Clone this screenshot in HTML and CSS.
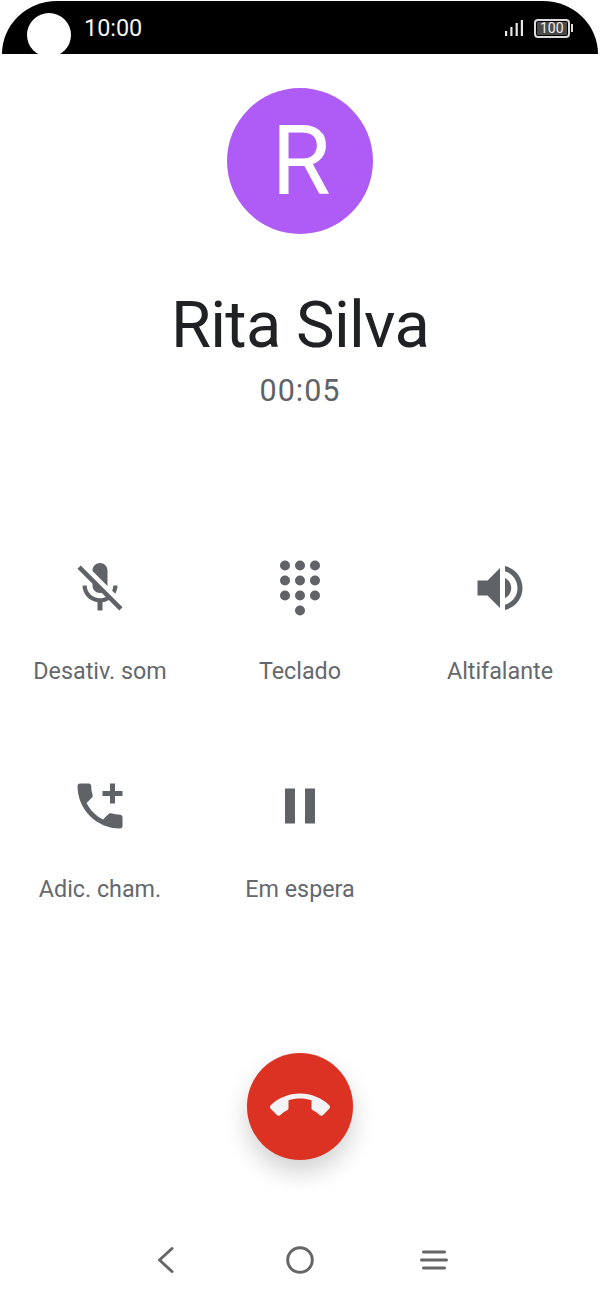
FILE: index.html
```html
<!DOCTYPE html>
<html lang="pt">
<head>
<meta charset="utf-8">
<title>Chamada</title>
<link rel="stylesheet" href="styles.css">
</head>
<body>
<div class="screen">
  <header class="status">
    <span class="camera"></span>
    <span class="time">10:00</span>
    <span class="status-right">
      <svg class="signal" width="20" height="18" viewBox="0 0 20 18"><path d="M1 12h2.200v5H1zM6.300 8h2.200v9H6.300zM11.600 4h2.200v13h-2.200zM16.800 1H19v16h-2.200z"/></svg>
      <span class="battery"><span class="battery-fill">100</span></span><span class="battery-tip"></span>
    </span>
  </header>

  <section class="contact">
    <div class="avatar">R</div>
    <h1 class="name">Rita Silva</h1>
    <div class="timer">00:05</div>
  </section>

  <section class="actions">
    <div class="action">
      <svg class="icon" viewBox="0 0 24 24"><path d="M19 11h-1.700c0 .74-.16 1.430-.43 2.050l1.230 1.230c.56-.98.9-2.090.9-3.280zm-4.020.17c0-.06.02-.11.02-.17V5c0-1.660-1.340-3-3-3S9 3.340 9 5v.18l5.980 5.990zM4.270 3L3 4.270l6.010 6.010V11c0 1.660 1.330 3 2.990 3 .22 0 .44-.03.65-.08l1.660 1.660c-.71.33-1.500.52-2.310.52-2.760 0-5.300-2.100-5.300-5.100H5c0 3.410 2.720 6.230 6 6.720V21h2v-3.280c.91-.13 1.770-.45 2.540-.9L19.730 21 21 19.730 4.270 3z"/></svg>
      <span class="label">Desativ. som</span>
    </div>
    <div class="action">
      <svg class="icon" viewBox="0 0 24 24"><circle cx="12" cy="21" r="2"/><circle cx="6" cy="3" r="2"/><circle cx="6" cy="9" r="2"/><circle cx="6" cy="15" r="2"/><circle cx="12" cy="3" r="2"/><circle cx="12" cy="9" r="2"/><circle cx="12" cy="15" r="2"/><circle cx="18" cy="3" r="2"/><circle cx="18" cy="9" r="2"/><circle cx="18" cy="15" r="2"/></svg>
      <span class="label">Teclado</span>
    </div>
    <div class="action">
      <svg class="icon" viewBox="0 0 24 24"><path d="M3 9v6h4l5 5V4L7 9H3zm13.500 3c0-1.770-1.020-3.290-2.500-4.030v8.050c1.480-.73 2.500-2.250 2.500-4.020zM14 3.230v2.060c2.890.86 5 3.540 5 6.710s-2.110 5.850-5 6.710v2.060c4.010-.91 7-4.490 7-8.770s-2.990-7.860-7-8.770z"/></svg>
      <span class="label">Altifalante</span>
    </div>
    <div class="action">
      <svg class="icon" viewBox="0 0 24 24"><path d="M20 15.500c-1.250 0-2.450-.2-3.570-.57-.35-.11-.74-.03-1.020.24l-2.200 2.200c-2.830-1.440-5.150-3.750-6.590-6.590l2.200-2.210c.28-.26.36-.65.25-1C8.700 6.450 8.500 5.250 8.500 4c0-.55-.45-1-1-1H4c-.55 0-1 .45-1 1 0 9.390 7.610 17 17 17 .55 0 1-.45 1-1v-3.500c0-.55-.45-1-1-1zM21 6h-3V3h-2v3h-3v2h3v3h2V8h3z"/></svg>
      <span class="label">Adic. cham.</span>
    </div>
    <div class="action">
      <svg class="icon" viewBox="0 0 24 24"><path d="M6 19h4V5H6v14zm8-14v14h4V5h-4z"/></svg>
      <span class="label">Em espera</span>
    </div>
  </section>

  <div class="end-wrap">
    <div class="end-call">
      <svg class="end-icon" viewBox="0 0 24 24"><path d="M12 9c-1.600 0-3.150.25-4.600.72v3.100c0 .39-.23.74-.56.9-.98.49-1.870 1.120-2.660 1.850-.18.18-.43.28-.7.28-.28 0-.53-.11-.71-.29L.29 13.080c-.18-.17-.29-.42-.29-.7 0-.28.11-.53.29-.71C3.340 8.780 7.460 7 12 7s8.660 1.780 11.710 4.670c.18.18.29.43.29.71 0 .28-.11.53-.29.71l-2.480 2.480c-.18.18-.43.29-.71.29-.27 0-.52-.11-.7-.28-.79-.74-1.690-1.360-2.670-1.850-.33-.16-.56-.5-.56-.9v-3.100C15.150 9.250 13.600 9 12 9z"/></svg>
    </div>
  </div>

  <nav class="navbar">
    <svg class="nav-icon" viewBox="0 0 30 30"><path d="M22 3.500 9.500 15 22 26.500"/></svg>
    <svg class="nav-icon" viewBox="0 0 30 30"><circle cx="15" cy="15" r="12.300"/></svg>
    <svg class="nav-icon" viewBox="0 0 30 30"><path d="M3.500 7h21M1.500 15h25M3.500 23h21"/></svg>
  </nav>
</div>
</body>
</html>
```
FILE: styles.css
```css
* { box-sizing: border-box; }
html, body { margin: 0; padding: 0; background: #fff; }
body { font-family: Roboto, "Liberation Sans", sans-serif; }
.screen { width: 600px; height: 1300px; overflow: hidden; display: flex; flex-direction: column; align-items: center; }

.status { position: relative; width: 596px; height: 53px; margin-top: 1px; flex: none; background: #000; border-radius: 56px 56px 0 0 / 54px 54px 0 0; color: #fff; display: flex; align-items: center; padding: 1px 25px 0 82px; justify-content: space-between; }
.camera { position: absolute; left: 25px; top: 12px; width: 44px; height: 44px; border-radius: 50%; background: #fff; }
.time { font-size: 23.400px; line-height: 52px; color: #f4f4f4; }
.status-right { display: flex; align-items: center; }
.signal { fill: #e8e8e8; margin-right: 10px; }
.battery { width: 36.500px; height: 19px; border: 2px solid #ddd; border-radius: 4px; padding: 1px; display: flex; }
.battery-fill { flex: 1; background: #4a4a4a; border-radius: 1px; font-size: 14px; line-height: 13px; text-align: center; color: #eee; }
.battery-tip { width: 2px; height: 8px; margin-left: 1px; background: #ddd; }

.contact { display: flex; flex-direction: column; align-items: center; margin-top: 33.500px; flex: none; }
.avatar { width: 146.600px; height: 146.600px; padding-left: 2px; border-radius: 50%; background: #af5cf7; color: #fff; font-size: 96px; line-height: 147px; text-align: center; }
.name { margin: 49px 0 0; font-size: 65px; line-height: 84px; font-weight: 400; letter-spacing: -.7px; color: #202124; }
.timer { margin-top: 6px; font-size: 30.500px; line-height: 36px; letter-spacing: 1px; color: #5f6368; }

.actions { width: 600px; margin-top: 149px; flex: none; display: grid; grid-template-columns: repeat(3, 200px); grid-auto-rows: 218px; }
.action { display: flex; flex-direction: column; align-items: center; }
.icon { width: 60px; height: 60px; fill: #5f6368; }
.label { margin-top: 38px; font-size: 23.300px; line-height: 30px; color: #65686c; }

.end-wrap { flex: none; margin-top: 59px; }
.end-call { width: 106.600px; height: 106.600px; border-radius: 50%; background: #dc3224; box-shadow: 0 12px 24px rgba(0,0,0,.18); display: flex; align-items: center; justify-content: center; }
.end-icon { width: 60px; height: 60px; fill: #f1f3f4; }

.navbar { flex: none; width: 300px; margin-top: 85.400px; display: flex; justify-content: space-between; }
.nav-icon { width: 30px; height: 30px; fill: none; stroke: #666; stroke-width: 3; stroke-linecap: round; stroke-linejoin: round; }
```
